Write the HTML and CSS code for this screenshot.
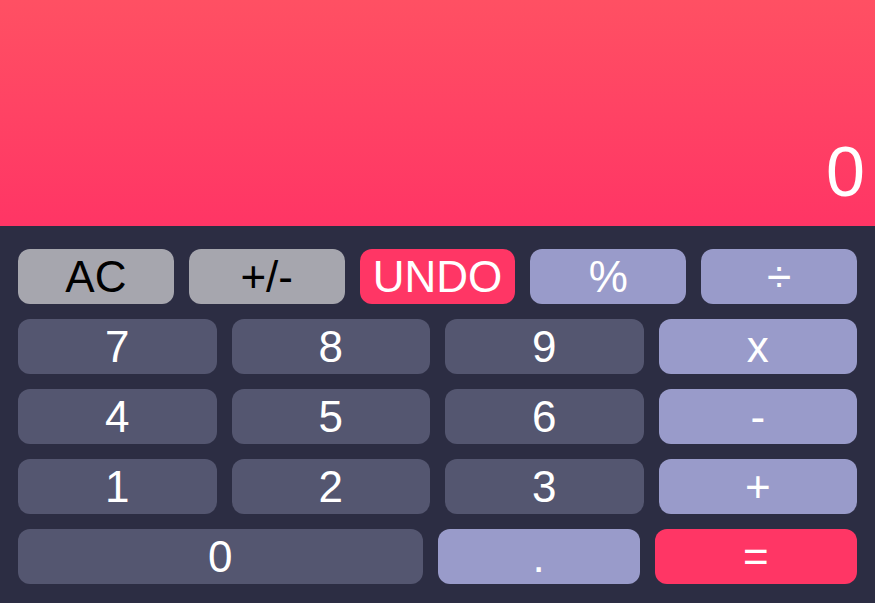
FILE: index.html
```html
<!DOCTYPE html>
<html lang="en">
<head>
<meta charset="utf-8">
<title>Calculator</title>
<link rel="stylesheet" href="styles.css">
</head>
<body>
<div class="calc">
  <div class="display"><span class="value">0</span></div>
  <div class="keypad">
    <div class="row">
      <button class="key gray">AC</button>
      <button class="key gray">+/-</button>
      <button class="key accent">UNDO</button>
      <button class="key op">%</button>
      <button class="key op">÷</button>
    </div>
    <div class="row">
      <button class="key num">7</button>
      <button class="key num">8</button>
      <button class="key num">9</button>
      <button class="key op">x</button>
    </div>
    <div class="row">
      <button class="key num">4</button>
      <button class="key num">5</button>
      <button class="key num">6</button>
      <button class="key op">-</button>
    </div>
    <div class="row">
      <button class="key num">1</button>
      <button class="key num">2</button>
      <button class="key num">3</button>
      <button class="key op">+</button>
    </div>
    <div class="row">
      <button class="key num wide">0</button>
      <button class="key op">.</button>
      <button class="key accent">=</button>
    </div>
  </div>
</div>
</body>
</html>
```
FILE: styles.css
```css
* { box-sizing: border-box; }
html, body {
  margin: 0;
  padding: 0;
  height: 100%;
  background: #2c2d43;
  font-family: "Liberation Sans", Arial, sans-serif;
}
.calc {
  display: flex;
  flex-direction: column;
  height: 603px;
}
.display {
  height: 226px;
  background: linear-gradient(to bottom, #ff5063, #ff3565);
  display: flex;
  align-items: flex-end;
  justify-content: flex-end;
  padding: 0 10px 19px 0;
  color: #fff;
}
.value {
  font-size: 70px;
  line-height: 70px;
}
.keypad {
  flex: 1;
  display: flex;
  flex-direction: column;
  gap: 15px;
  padding: 23px 18px 19px 18px;
}
.row {
  display: flex;
  gap: 15px;
  height: 55px;
}
.key {
  flex: 1 1 0;
  min-width: 0;
  border: none;
  border-radius: 12px;
  font-family: "Liberation Sans", Arial, sans-serif;
  font-size: 44px;
  line-height: 1;
  padding: 0;
  color: #fff;
  display: flex;
  align-items: center;
  justify-content: center;
}
.key.wide { flex: 2 1 0; }
.gray { background: #a6a6ae; color: #000; }
.accent { background: #ff3665; }
.op { background: #999bca; }
.num { background: #545670; }
```
